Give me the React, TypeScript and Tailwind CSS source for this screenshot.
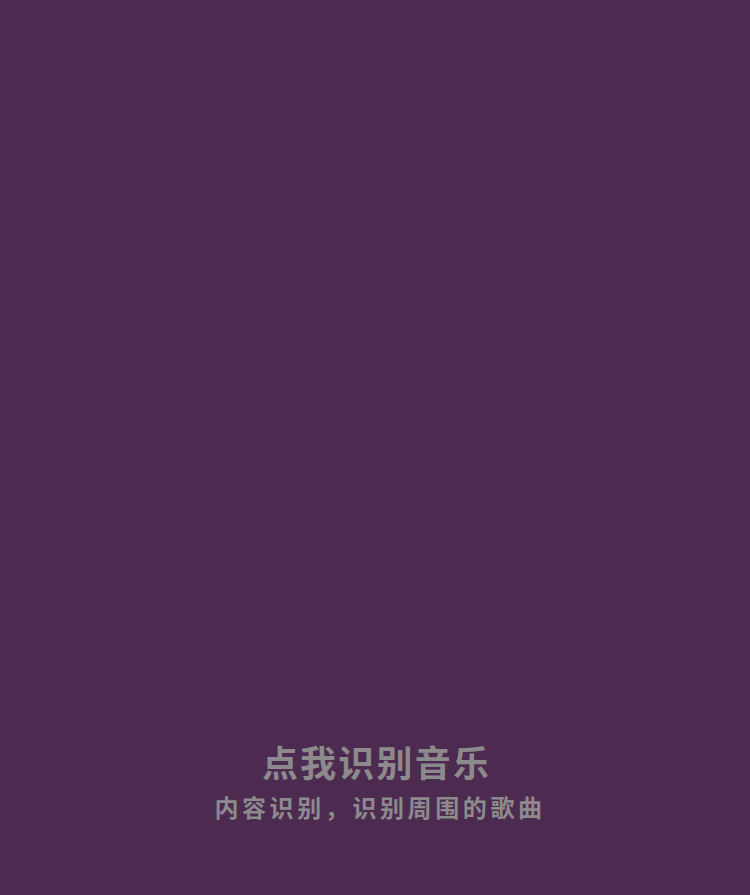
import React from "react";

const App = () => {
  return (
    <div className="flex h-screen w-full flex-col items-center justify-end bg-[#4d2b51] pb-[72px] font-['Noto_Sans_CJK_SC',sans-serif]">
      <h1 className="pl-[3px] text-[36px] font-bold leading-[44px] tracking-[2.2px] text-[#8c8a8c]">
        点我识别音乐
      </h1>
      <p className="mt-[8px] pl-[10px] text-[24px] font-bold leading-[32px] tracking-[3.6px] text-[#8c8a8c]">
        内容识别，识别周围的歌曲
      </p>
    </div>
  );
};

export default App;
